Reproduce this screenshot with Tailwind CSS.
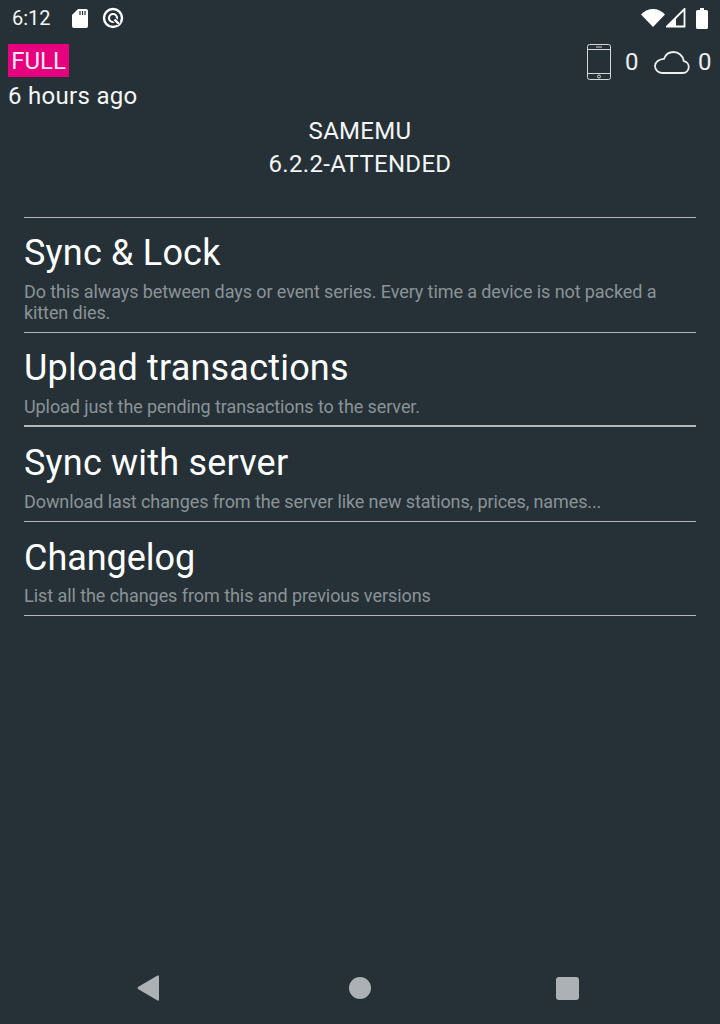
<!DOCTYPE html>
<html lang="en">
<head>
  <meta charset="UTF-8">
  <title>SAMEMU</title>
  <script src="https://cdn.jsdelivr.net/npm/@tailwindcss/browser@4"></script>
</head>
<body class="bg-[#253136] text-white font-['Roboto',sans-serif]">
  <div class="w-[720px] h-[1024px] flex flex-col overflow-hidden">

    <!-- status bar -->
    <div class="h-[36px] flex items-center justify-between pl-[12px] pr-[12px] shrink-0">
      <div class="flex items-center">
        <span class="text-[20px] leading-[36px] text-[#f5f6f6] w-[60px]">6:12</span>
        <svg class="w-[16px] h-[20px]" viewBox="0 0 16 20"><path d="M6 1h8a2 2 0 0 1 2 2v15a2 2 0 0 1-2 2H2a2 2 0 0 1-2-2V7z" fill="#fff"/><path d="M8 3v4M10.500 3v4M13 3v4" stroke="#253136" stroke-width="1.200"/></svg>
        <svg class="w-[24px] h-[24px] ml-[13px]" viewBox="0 0 24 24" fill="none" stroke="#fff"><circle cx="12" cy="12" r="9" stroke-width="2.400"/><circle cx="12" cy="12" r="4" stroke-width="2.200"/><path d="M13 13l5 5" stroke="#253136" stroke-width="4.500"/><path d="M13.500 13.500l4.500 4.500" stroke-width="2.400"/></svg>
      </div>
      <div class="flex items-center">
        <svg class="w-[24px] h-[20px]" viewBox="0 0 24 20"><path d="M0 6.500C3 3 7.500 1 12 1s9 2 12 5.500L12 19z" fill="#fff"/></svg>
        <svg class="w-[20px] h-[20px] ml-[1px]" viewBox="0 0 20 20"><path d="M1 18.500L18.500 1v17.500z" fill="none" stroke="#fff" stroke-width="1.800"/><path d="M10 18.500V9.500L1 18.500z" fill="#fff"/></svg>
        <svg class="w-[12px] h-[21px] ml-[10px]" viewBox="0 0 12 21"><path d="M4 0h4v2h2.500a1.500 1.500 0 0 1 1.500 1.500V19.500a1.500 1.500 0 0 1-1.500 1.500h-9A1.500 1.500 0 0 1 0 19.500V3.500A1.500 1.500 0 0 1 1.500 2H4z" fill="#fff"/></svg>
      </div>
    </div>

    <!-- header -->
    <div class="flex justify-between pl-[8px] pr-[9px] shrink-0">
      <div>
        <div class="mt-[8px] w-[61px] h-[33px] bg-[#e6007e] text-[24px] leading-[35px] text-center text-[#fbe9f3]">FULL</div>
        <div class="text-[24px] leading-[31px] mt-[4px] text-[#f5f6f6] tracking-[0.3px]">6 hours ago</div>
      </div>
      <div class="flex items-center h-[36px] mt-[8px] text-[24px] text-[#eceeef]">
        <svg class="w-[24px] h-[36px]" viewBox="0 0 24 36" fill="none" stroke="#d5d8da" stroke-width="1"><rect x="0.500" y="0.500" width="23" height="35" rx="2"/><path d="M0.500 5.500h23M0.500 29.500h23"/><path d="M9 3h6" stroke-width="1"/><circle cx="12" cy="32.500" r="1.500"/></svg>
        <span class="ml-[14px] w-[13px]">0</span>
        <svg class="ml-[16px] w-[36px] h-[23px]" viewBox="0 0 36 23" fill="none" stroke="#eceeef" stroke-width="1.800"><path d="M8 22H29a6 6 0 0 0 .8-11.900C29 4.500 24.500 1 19.500 1 15 1 11.500 3.700 10 7.800 5 8 1 11 1 15a7 7 0 0 0 7 7z"/></svg>
        <span class="ml-[8px] w-[13px]">0</span>
      </div>
    </div>

    <!-- title -->
    <div class="text-center text-[24px] leading-[33px] text-[#f5f6f6] mt-[3px] shrink-0 tracking-[0.3px]">
      <div>SAMEMU</div>
      <div>6.2.2-ATTENDED</div>
    </div>

    <!-- menu -->
    <div class="mx-[24px] mt-[36px] border-t border-[#b4b8bb]">
      <div class="h-[115px] border-b border-[#b4b8bb] pt-[12px]">
        <div class="text-[36px] leading-[47px] tracking-[0.2px]">Sync &amp; Lock</div>
        <div class="text-[18px] leading-[21px] text-[#8b9398] mt-[4px] w-[650px] tracking-[-0.09px]">Do this always between days or event series. Every time a device is not packed a kitten dies.</div>
      </div>
      <div class="h-[94px] border-b-2 border-[#b4b8bb] pt-[12px]">
        <div class="text-[36px] leading-[47px] tracking-[0.2px]">Upload transactions</div>
        <div class="text-[18px] leading-[21px] text-[#8b9398] mt-[4px] tracking-[-0.09px]">Upload just the pending transactions to the server.</div>
      </div>
      <div class="h-[95px] border-b border-[#b4b8bb] pt-[13px]">
        <div class="text-[36px] leading-[47px] tracking-[0.2px]">Sync with server</div>
        <div class="text-[18px] leading-[21px] text-[#8b9398] mt-[4px] tracking-[-0.1px]">Download last changes from the server like new stations, prices, names...</div>
      </div>
      <div class="h-[94px] border-b border-[#b4b8bb] pt-[13px]">
        <div class="text-[36px] leading-[47px] tracking-[-0.05px]">Changelog</div>
        <div class="text-[18px] leading-[21px] text-[#8b9398] mt-[3px] tracking-[-0.06px]">List all the changes from this and previous versions</div>
      </div>
    </div>

    <!-- nav bar -->
    <div class="mt-auto h-[72px] relative shrink-0">
      <div class="flex items-center h-full pl-[137px]">
        <svg class="w-[23px] h-[26px]" viewBox="0 0 23 26"><path d="M1 12L20.500 0.500Q22 0 22 1.500V24.500Q22 26 20.500 25.500L1 14Q0 13 1 12z" fill="#acb1b5"/></svg>
        <div class="ml-[189px] w-[22px] h-[22px] rounded-full bg-[#acb1b5]"></div>
        <div class="ml-[185px] w-[23px] h-[23px] rounded-[3px] bg-[#acb1b5]"></div>
      </div>
    </div>
  </div>
</body>
</html>
